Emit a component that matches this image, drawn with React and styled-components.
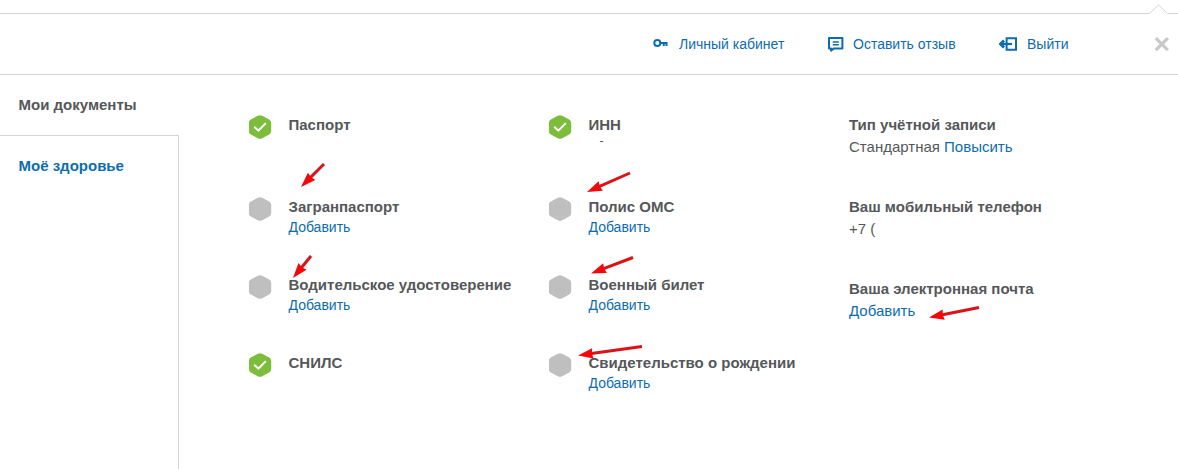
import React from 'react';
import styled, { createGlobalStyle } from 'styled-components';

const blue = '#0d6cb0'
const darkgrey = '#55585a'
const linegrey = '#d3d5d7'
const green = '#7cbd3c'
const hexgrey = '#bfbfbf'
const red = '#dc1217'

const GlobalStyle = createGlobalStyle`
  * {
    box-sizing: border-box;
  }
  body {
    margin: 0;
    background: white;
    color: ${darkgrey};
    font-family: "Liberation Sans", Arial, sans-serif;
    font-size: 14px;
    overflow: hidden;
  }
`

const Page = styled.div`
  position: relative;
  height: 469px;
  display: flex;
  flex-direction: column;
`

const Pointer = styled.svg`
  display: block;
  width: 1178px;
  height: 14px;
`

const Header = styled.header`
  height: 61px;
  display: flex;
  justify-content: flex-end;
  align-items: center;
  padding-right: 8px;
  border-bottom: 1px solid ${linegrey};
`

const HeaderLink = styled.a`
  display: flex;
  align-items: center;
  width: ${props => props.$width}px;
  color: ${blue};
  line-height: 20px;
  white-space: nowrap;
  cursor: pointer;
  svg {
    flex: none;
    margin-right: ${props => props.$gap}px;
  }
`

const CloseButton = styled.button`
  width: 16px;
  height: 16px;
  padding: 0;
  border: 0;
  background: none;
  cursor: pointer;
  svg {
    display: block;
  }
`

const Body = styled.div`
  flex: 1;
  display: flex;
`

const Sidebar = styled.nav`
  width: 179px;
  display: flex;
  flex-direction: column;
`

const Tab = styled.a`
  height: 60px;
  padding: 20px 0 0 18.5px;
  font-size: 15px;
  line-height: 20px;
  font-weight: bold;
`

const TabPanel = styled.div`
  flex: 1;
  border: 1px solid ${linegrey};
  border-width: 1px 1px 0 0;
  ${Tab} {
    display: block;
    color: ${blue};
  }
`

const Documents = styled.main`
  display: grid;
  grid-template-columns: 300px 300px;
  grid-template-rows: 82px 78px 78px 78px;
  padding: 40px 0 0 70px;
`

const DocumentItem = styled.div`
  display: flex;
`

const Title = styled.div`
  font-size: 15px;
  line-height: 20px;
  font-weight: bold;
  white-space: nowrap;
`

const DocumentText = styled.div`
  margin-left: 16.5px;
`

const AddLink = styled.a`
  color: ${blue};
  line-height: 20px;
  cursor: pointer;
`

const Dash = styled.div`
  padding-left: 11px;
  font-size: 12px;
  line-height: 12px;
`

const Account = styled.aside`
  padding-top: 40px;
`

const AccountItem = styled.section`
  height: 82px;
`

const AccountValue = styled.div`
  margin-top: 1px;
  font-size: 15px;
  line-height: 22px;
  a {
    color: ${blue};
    cursor: pointer;
  }
`

const Arrows = styled.svg`
  position: absolute;
  top: 0;
  left: 0;
  pointer-events: none;
`

const KeyIcon = () =>
  <svg width="16" height="12" viewBox="0 0 16 12" fill="none" stroke={blue} strokeWidth="2">
    <circle cx="4.3" cy="5" r="3"/>
    <path d="M7.3 5H14.5M10.8 5v3M13.5 5v3"/>
  </svg>

const FeedbackIcon = () =>
  <svg width="16" height="16" viewBox="0 0 16 16" fill="none" stroke={blue}>
    <path d="M1 2h13.4v10.6H5.6L3 14.6v-2H1z" strokeWidth="2" strokeLinejoin="round"/>
    <path d="M4.8 6h6M4.8 8.8h6" strokeWidth="1.5"/>
  </svg>

const ExitIcon = () =>
  <svg width="18" height="16" viewBox="0 0 18 16" fill="none" stroke={blue}>
    <path d="M7.6 2.2H17v11.6H7.6z" strokeWidth="2"/>
    <path d="M1.5 8H13" strokeWidth="2.2"/>
    <path d="M5 4.4L1.5 8L5 11.6" strokeWidth="2.8"/>
  </svg>

const CloseIcon = () =>
  <svg width="16" height="16" viewBox="0 0 16 16">
    <path d="M1.8 2.2l12 12M13.8 2.2l-12 12" stroke="#c8c8c8" strokeWidth="3.2"/>
  </svg>

const StatusIcon = ({ done }) =>
  <svg width="23" height="24" viewBox="0 0 23 24">
    <path
      d="M8.8.8Q11 -.4 13.2.8L20.2 4.6Q22.2 5.8 22.2 8V16Q22.2 18.2 20.2 19.4L13.2 23.2Q11 24.4 8.8 23.2L1.8 19.4Q-.2 18.2 -.2 16V8Q-.2 5.8 1.8 4.6Z"
      fill={done ? green : hexgrey}
    />
    {done && <path d="M5.2 11.8l4.2 3.9 7.4-7.6" fill="none" stroke="white" strokeWidth="2"/>}
  </svg>

const documents = [
  { title: 'Паспорт', done: true },
  { title: 'ИНН', done: true, value: '-' },
  { title: 'Загранпаспорт' },
  { title: 'Полис ОМС' },
  { title: 'Водительское удостоверение' },
  { title: 'Военный билет' },
  { title: 'СНИЛС', done: true },
  { title: 'Свидетельство о рождении' },
]

// tail x, y and tip x, y
const arrows = [
  [324, 164, 301, 187],
  [311, 256, 293, 278],
  [630, 173, 587, 192],
  [633, 257.5, 591, 273.5],
  [642, 346.5, 578, 355.5],
  [979, 307.5, 929, 317.5],
]

const Arrow = ({ points: [x1, y1, x2, y2] }) => {
  const length = Math.hypot(x2 - x1, y2 - y1)
  const angle = Math.atan2(y2 - y1, x2 - x1) * 180 / Math.PI
  return (
    <g transform={`translate(${x2} ${y2}) rotate(${angle})`}>
      <path d={`M${-length} 0H-10`} stroke={red} strokeWidth="3"/>
      <path d="M0 0L-15 -5.2L-14 0L-15 5.2Z" fill="#f4060a"/>
    </g>
  )
}

const DocumentCard = ({ title, done, value }) =>
  <DocumentItem>
    <StatusIcon done={done}/>
    <DocumentText>
      <Title>{title}</Title>
      {!done && <AddLink>Добавить</AddLink>}
      {value && <Dash>{value}</Dash>}
    </DocumentText>
  </DocumentItem>

const App = () =>
  <Page>
    <GlobalStyle/>
    <Pointer viewBox="0 0 1178 14" fill="none" stroke={linegrey}>
      <path d="M0 13.5H1149.5L1158.5 5L1167.5 13.5H1178"/>
    </Pointer>
    <Header>
      <HeaderLink $width={175} $gap={10}><KeyIcon/>Личный кабинет</HeaderLink>
      <HeaderLink $width={171} $gap={9}><FeedbackIcon/>Оставить отзыв</HeaderLink>
      <HeaderLink $width={155} $gap={10}><ExitIcon/>Выйти</HeaderLink>
      <CloseButton aria-label="Закрыть"><CloseIcon/></CloseButton>
    </Header>
    <Body>
      <Sidebar>
        <Tab>Мои документы</Tab>
        <TabPanel>
          <Tab>Моё здоровье</Tab>
        </TabPanel>
      </Sidebar>
      <Documents>
        {documents.map(item => <DocumentCard key={item.title} {...item}/>)}
      </Documents>
      <Account>
        <AccountItem>
          <Title>Тип учётной записи</Title>
          <AccountValue>Стандартная <a>Повысить</a></AccountValue>
        </AccountItem>
        <AccountItem>
          <Title>Ваш мобильный телефон</Title>
          <AccountValue>+7 (</AccountValue>
        </AccountItem>
        <AccountItem>
          <Title>Ваша электронная почта</Title>
          <AccountValue><a>Добавить</a></AccountValue>
        </AccountItem>
      </Account>
    </Body>
    <Arrows width="1178" height="469">
      {arrows.map((points, i) => <Arrow key={i} points={points}/>)}
    </Arrows>
  </Page>

export default App
